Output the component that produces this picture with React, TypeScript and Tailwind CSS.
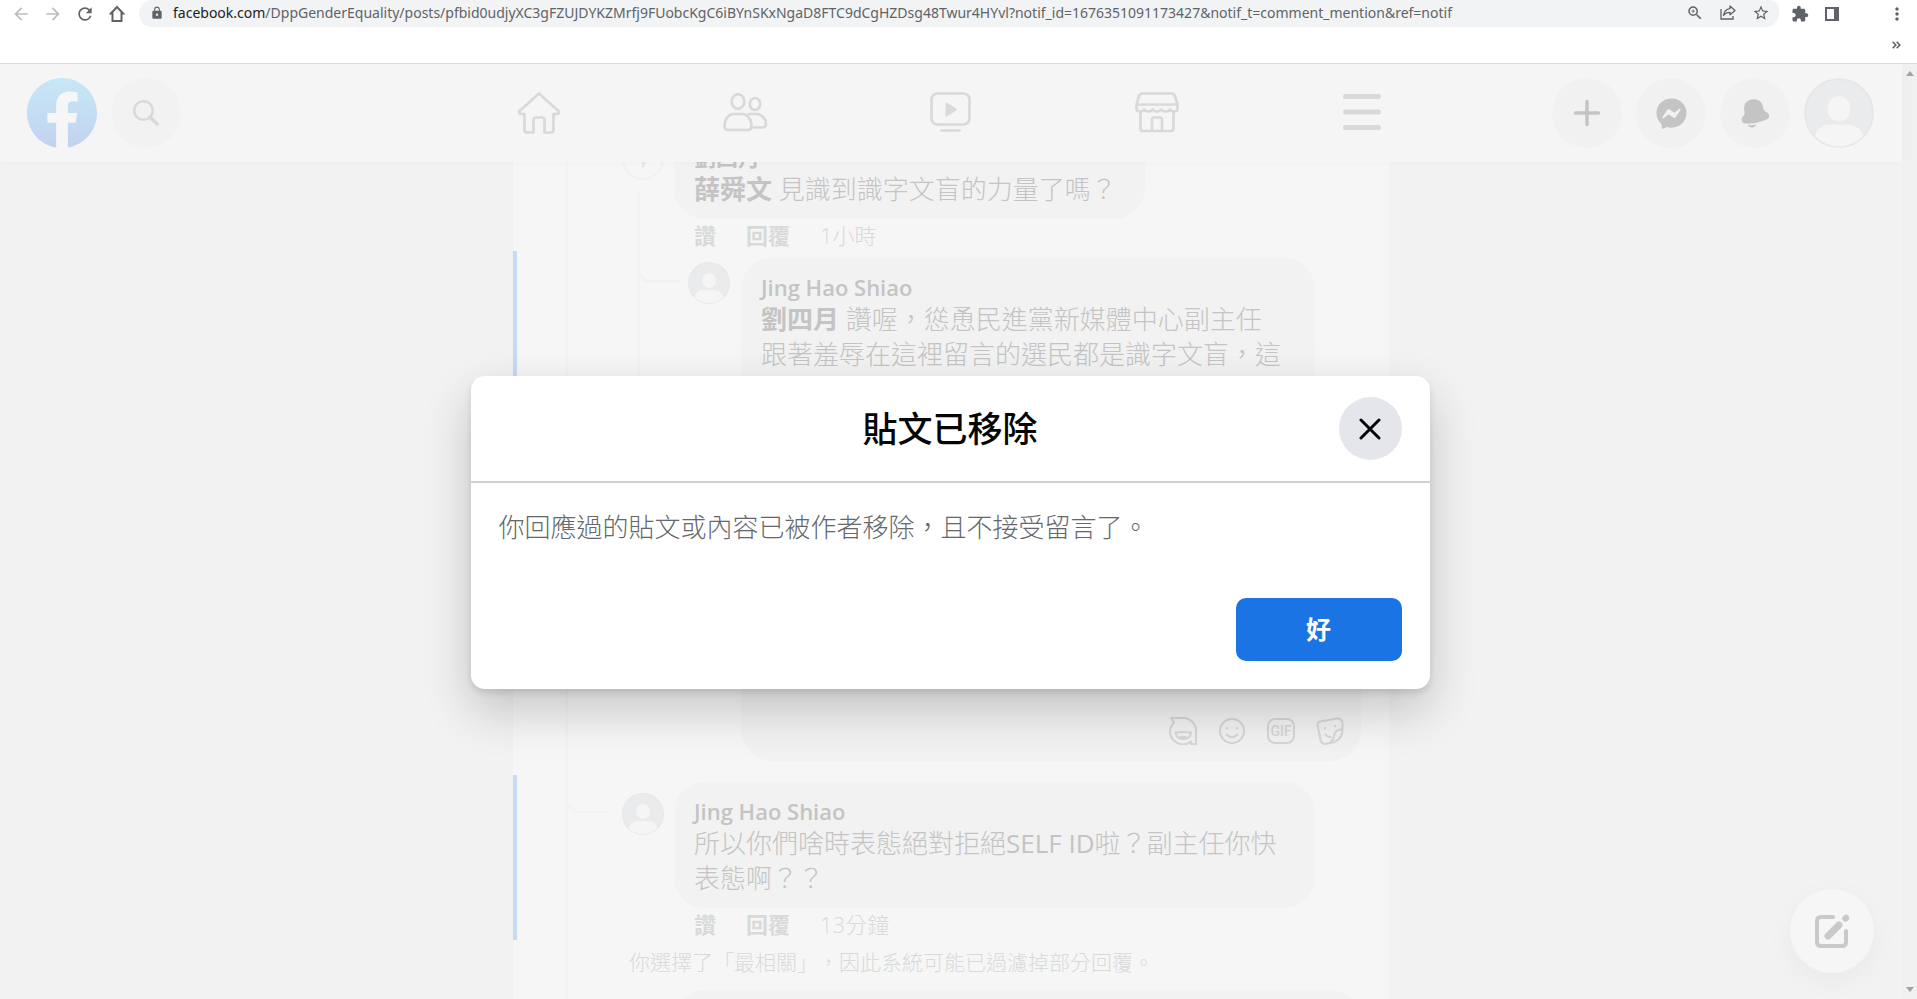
import React from "react";
import { MdArrowBack, MdArrowForward, MdRefresh, MdLock, MdZoomIn, MdStarBorder, MdExtension, MdMoreVert } from "react-icons/md";

const CJK = "font-['Open_Sans','Noto_Sans_CJK_TC',sans-serif] [text-spacing-trim:space-all]";

function HomeOutline() {
  return (
    <svg width="16" height="18" viewBox="0 0 16 18" fill="none" stroke="#5f6368" strokeWidth="2" aria-hidden="true">
      <path d="M8 2 1.8 8.5H3.5V16h9V8.5h1.7Z" />
    </svg>
  );
}

function ShareIcon() {
  return (
    <svg width="16" height="15" viewBox="0 0 16 15" fill="none" stroke="#5f6368" strokeWidth="1.3" aria-hidden="true">
      <path d="M1 4v10h12v-3" />
      <path d="M10 1l5 4.500-5 4.300V7.300C7 7.200 5 8 3.500 10.500 4 6.500 6.500 4 10 3.600Z" strokeLinejoin="round" />
    </svg>
  );
}

function BrowserToolbar() {
  return (
    <div className="shrink-0 border-b border-[#dadce0] bg-white text-[#5f6368]">
      <div className="flex h-[27px] items-center pr-[10px] pl-[11px]">
        <div className="flex w-32 items-center gap-3">
          <button aria-label="Back" className="text-[#babcbe]"><MdArrowBack size={20} /></button>
          <button aria-label="Forward" className="text-[#babcbe]"><MdArrowForward size={20} /></button>
          <button aria-label="Reload"><MdRefresh size={20} /></button>
          <button aria-label="Home" className="flex w-5 justify-center"><HomeOutline /></button>
        </div>
        <div className="flex h-full min-w-0 flex-1 items-center rounded-b-[14px] rounded-tl-[14px] rounded-tr-[10px] bg-[#f1f3f4] pr-[9px] pb-[2px] pl-[11px]">
          <MdLock size={14} className="shrink-0" />
          <div className="ml-[9px] min-w-0 flex-1 truncate font-['Noto_Sans',sans-serif] text-[14px] leading-6 text-[#5f6368]">
            <span className="text-[#202124]">facebook.com</span>/DppGenderEquality/posts/pfbid0udjyXC3gFZUJDYKZMrfj9FUobcKgC6iBYnSKxNgaD8FTC9dCgHZDsg48Twur4HYvl?notif_id=1676351091173427&amp;notif_t=comment_mention&amp;ref=notif
          </div>
          <div className="flex items-center gap-4">
            <button aria-label="Zoom"><MdZoomIn size={18} /></button>
            <button aria-label="Share"><ShareIcon /></button>
            <button aria-label="Bookmark"><MdStarBorder size={18} /></button>
          </div>
        </div>
        <div className="ml-3 flex items-center">
          <button aria-label="Extensions"><MdExtension size={18} /></button>
          <button aria-label="Side panel" className="ml-4">
            <svg width="14" height="14" viewBox="0 0 14 14" aria-hidden="true">
              <path fill="#5f6368" fillRule="evenodd" d="M0 0h14v14H0ZM2 2v10h7V2Z" />
            </svg>
          </button>
          <button aria-label="Menu" className="ml-12"><MdMoreVert size={20} /></button>
        </div>
      </div>
      <div className="flex h-9 items-center justify-end pr-4">
        <button aria-label="More bookmarks">
          <svg width="9" height="8" viewBox="0 0 9 8" fill="none" stroke="#5f6368" strokeWidth="1.600" aria-hidden="true">
            <path d="M.7.8 3.800 4 .7 7.200M4.700.8 7.800 4 4.700 7.200" />
          </svg>
        </button>
      </div>
    </div>
  );
}

function FacebookLogo() {
  return (
    <svg viewBox="0 0 36 36" className="size-[70px]" aria-hidden="true">
      <defs>
        <linearGradient id="fb" x1="0" y1="0" x2="0" y2="1">
          <stop offset="0" stopColor="#c6e8f8" />
          <stop offset="1" stopColor="#c2d2ef" />
        </linearGradient>
      </defs>
      <path fill="url(#fb)" d="M15 35.800C6.500 34.300 0 26.900 0 18 0 8.100 8.100 0 18 0s18 8.100 18 18c0 8.900-6.500 16.300-15 17.800l-1-.8h-4l-1 .8z" />
      <path fill="#f6f6f6" d="M25 23l.8-5H21v-3.500c0-1.400.5-2.500 2.700-2.500H26V7.400c-1.300-.2-2.700-.4-4-.4-4.100 0-7 2.500-7 7v4h-4.500v5H15v12.700c1 .2 2 .3 3 .3s2-.1 3-.3V23h4z" />
    </svg>
  );
}

function NavIcon({ label, children }: { label: string; children: React.ReactNode }) {
  return (
    <a href="#" aria-label={label} className="flex flex-1 justify-center">
      <svg width="46" height="50" viewBox="0 0 46 50" fill="none" stroke="#d8dada" strokeWidth="2.700" strokeLinecap="round" strokeLinejoin="round" aria-hidden="true">
        {children}
      </svg>
    </a>
  );
}

function RoundButton({ label, children }: { label: string; children: React.ReactNode }) {
  return (
    <button aria-label={label} className="flex size-[70px] items-center justify-center rounded-full bg-[#f1f1f1] text-[#c4c4c4]">
      {children}
    </button>
  );
}

function Avatar({ className }: { className: string }) {
  return (
    <svg viewBox="0 0 42 42" className={className} aria-hidden="true">
      <clipPath id="avatar-disc"><circle cx="21" cy="21" r="20" /></clipPath>
      <circle cx="21" cy="21" r="20.300" fill="#eaebed" stroke="#e6e7e9" strokeWidth="1.200" />
      <g fill="#f5f5f5" clipPath="url(#avatar-disc)">
        <rect x="14.300" y="11" width="13.400" height="15" rx="6.700" />
        <path d="M6 37c1-6 5-9 9-9h12c4 0 8 3 9 9l-5 5H11Z" />
      </g>
    </svg>
  );
}

function SiteHeader() {
  return (
    <header className="z-10 flex h-[98px] shrink-0 items-center justify-between bg-[#f5f5f5] pr-7 pl-[27px] shadow-[0_2px_6px_rgba(0,0,0,0.02)]">
      <div className="flex w-[322px] gap-[14px]">
        <a href="#" aria-label="Facebook"><FacebookLogo /></a>
        <button aria-label="搜尋" className="flex size-[70px] items-center justify-center rounded-full bg-[#f2f2f2]">
          <svg width="28" height="28" viewBox="0 0 28 28" fill="none" stroke="#d8dada" strokeLinecap="round" aria-hidden="true">
            <circle cx="11.500" cy="11.500" r="9.300" strokeWidth="2.600" />
            <path d="M18.500 18.500 25 25" strokeWidth="3.800" />
          </svg>
        </button>
      </div>
      <nav className="flex w-[1030px] items-center pt-[2px]">
        <NavIcon label="首頁">
          <path d="M23 4.500 3 22.500q0 2.500 2.500 2.500H8.500V41q0 2.500 2.500 2.500h6.500V31q0-2.500 2.500-2.500h6q2.500 0 2.500 2.500v12.500H35q2.500 0 2.500-2.500V25H40.500q2.500 0 2.500-2.500Z" />
        </NavIcon>
        <NavIcon label="朋友">
          <ellipse cx="16" cy="12.500" rx="6.300" ry="7.300" />
          <ellipse cx="33" cy="15" rx="5.200" ry="6" />
          <path d="M2.500 37c0-7 4.500-12 9-12h9c4.500 0 9 5 9 12 0 3-1 4-3.500 4H6c-2.500 0-3.500-1-3.500-4ZM27 25h7.500c5 0 9.500 5 9.500 9.500 0 3-1 4-3.500 4h-10" />
        </NavIcon>
        <NavIcon label="影片">
          <rect x="3.500" y="4.500" width="38" height="31" rx="6" />
          <path d="M13.500 41.500h18" />
          <path d="M18.500 14.500v12l9.500-6Z" fill="#d8dada" strokeWidth="2" />
        </NavIcon>
        <NavIcon label="Marketplace">
          <path d="M8.500 4.500h29q2.500 0 3.500 2.500l2.500 8.500v4q0 3-3 3-3.500 0-4.500-2-1.500 2-4.300 2t-4.300-2q-1.500 2-4.400 2t-4.400-2q-1.500 2-4.300 2t-4.300-2q-1 2-4.500 2-3 0-3-3v-4l2.500-8.500q1-2.500 3.500-2.500ZM2.500 15.500h41M6.500 23v16.500q0 2.500 2.500 2.500h28q2.500 0 2.500-2.500V23M18 41.500V30.500q0-2 2-2h6q2 0 2 2v11" />
        </NavIcon>
        <NavIcon label="選單">
          <path d="M5.500 7.500h33M5.500 23h33M5.500 38.500h33" strokeWidth="5" />
        </NavIcon>
      </nav>
      <div className="flex w-[322px] justify-end gap-[14px]">
        <RoundButton label="建立">
          <svg width="28" height="28" viewBox="0 0 28 28" stroke="currentColor" strokeWidth="3.400" strokeLinecap="round" aria-hidden="true"><path d="M14 2.500v23M2.500 14h23" /></svg>
        </RoundButton>
        <RoundButton label="Messenger">
          <svg width="35" height="35" viewBox="0 0 28 28" fill="currentColor" aria-hidden="true">
            <path d="M14 2.042c6.760 0 12 4.952 12 11.640S20.760 25.322 14 25.322a13.091 13.091 0 0 1-3.474-.461.956.956 0 0 0-.641.047L7.500 25.959a.961.961 0 0 1-1.348-.849l-.065-2.134a.957.957 0 0 0-.322-.684A11.389 11.389 0 0 1 2 13.682C2 6.994 7.240 2.042 14 2.042ZM6.794 17.086a.57.57 0 0 0 .827.758l3.786-2.874a.722.722 0 0 1 .868 0l2.800 2.100a1.800 1.800 0 0 0 2.600-.481l3.525-5.592a.57.57 0 0 0-.827-.758l-3.786 2.874a.722.722 0 0 1-.868 0l-2.800-2.100a1.800 1.800 0 0 0-2.600.481Z" />
          </svg>
        </RoundButton>
        <RoundButton label="通知">
          <svg width="35" height="35" viewBox="0 0 28 28" fill="currentColor" aria-hidden="true">
            <path d="M7.847 23.488C9.207 23.488 11.443 23.363 14.467 22.806 13.944 24.228 12.581 25.247 10.980 25.247 9.649 25.247 8.483 24.542 7.825 23.488L7.847 23.488ZM24.923 15.730C25.170 17.002 24.278 18.127 22.270 19.076 21.170 19.595 18.724 20.583 14.684 21.369 11.568 21.974 9.285 22.113 7.848 22.113 7.421 22.113 7.068 22.101 6.790 22.085 4.574 21.958 3.324 21.248 3.077 19.976 2.702 18.049 3.295 17.305 4.278 16.073L4.537 15.748C5.200 14.907 5.459 14.081 5.035 11.902 4.086 7.022 6.284 3.687 11.064 2.753 15.846 1.830 19.134 4.096 20.083 8.977 20.506 11.156 21.056 11.824 21.986 12.355L22.348 12.561C23.720 13.335 24.548 13.802 24.923 15.730Z" />
          </svg>
        </RoundButton>
        <button aria-label="帳號"><Avatar className="size-[70px]" /></button>
      </div>
    </header>
  );
}

function Bubble({ name, children }: { name: string; children: React.ReactNode }) {
  return (
    <div className="rounded-[31px] bg-[#f2f2f2] pt-[14px] pr-7 pb-3 pl-5 text-[26px] leading-[35px] font-light text-[#c4c4c4]">
      <div className="text-[22px] leading-[30px] font-semibold">{name}</div>
      <p>{children}</p>
    </div>
  );
}

function Actions({ time }: { time: string }) {
  return (
    <div className="flex h-8 items-center gap-[30px] pl-5 text-[22px] leading-8 text-[#d8dada]">
      <button className="font-bold">讚</button>
      <button className="font-bold">回覆</button>
      <a href="#" className="font-light">{time}</a>
    </div>
  );
}

function ComposerIcons() {
  const names = ["虛擬替身貼圖", "表情符號", "GIF", "貼圖"];
  const shapes = [
    <path key="a" d="M2 1h12a13 13 0 0 1 13 13v13h-5v-2.500A13 13 0 0 1 1 15q0-5 4-9.500ZM6.500 15.500q7.500-1 15.500 0-.5 6.500-7.500 6.500t-8-6.500ZM10.500 21q3.500-2.500 7.500 0" />,
    <g key="b"><circle cx="14" cy="14" r="12" /><path d="M8.500 17.500q5.500 5.500 11 0M9 11v.5M19 11v.5" /></g>,
    <rect key="c" x="1" y="2" width="26" height="24" rx="7" />,
    <path key="d" d="M1.500 8q0-3 3-3.500L21 1.500q5-.5 5.500 4.500v7q0 8-8 12l-9 2q-4 0-5-4.500ZM26.500 12q-7 1-8 5-.5 5-4 9M9 11v.5M19 9v.5M9.500 17.500q2 3 5 2.500" />,
  ];
  return (
    <div className="flex gap-[21px]">
      {names.map((n, i) => (
        <button key={n} aria-label={n} className="relative flex size-7 items-center justify-center">
          <svg width="28" height="28" viewBox="0 0 28 28" fill="none" stroke="currentColor" strokeWidth="2" strokeLinecap="round" strokeLinejoin="round" className="absolute inset-0" aria-hidden="true">
            {shapes[i]}
          </svg>
          {n === "GIF" && <span className="font-['Roboto',sans-serif] text-[14px] leading-none font-medium">GIF</span>}
        </button>
      ))}
    </div>
  );
}

function Feed() {
  return (
    <main className="min-h-0 flex-1 overflow-hidden">
      <div className="relative mx-auto flex h-full max-w-[878px] flex-col border-x border-[#f0f1f1] bg-[#f6f6f6] *:shrink-0">
        <span className="absolute inset-y-0 left-[53px] w-[2px] bg-[#f2f2f2]" />
        <span className="absolute top-7 left-[124px] h-[300px] w-[3px] bg-[#f3f3f3]" />
        <article className="-mt-[34px] flex gap-[10px] pl-[109px]">
          <div className="relative mt-[10px] flex size-[42px] shrink-0 items-center justify-center overflow-hidden rounded-full border-2 border-[#f0f0f0] bg-[#f6f6f6]">
            <svg width="24" height="24" viewBox="0 0 24 24" fill="none" stroke="#f0e2e4" strokeWidth="2" aria-hidden="true"><path d="M2 6l6 8 3-4 1 9 7-12" /></svg>
          </div>
          <div className="w-fit">
            <Bubble name="劉四月"><b className="font-bold">薛舜文</b> 見識到識字文盲的力量了嗎？</Bubble>
            <Actions time="1小時" />
          </div>
        </article>

        <article className="relative h-[250px] border-l-4 border-[#c6daf3] pt-[7px] pr-[74px] pl-[171px]">
          <span className="absolute top-0 left-[120px] h-8 w-[42px] rounded-bl-[14px] border-b-[3px] border-l-[3px] border-[#f2f2f2]" />
          <div className="flex h-full gap-[11px]">
            <Avatar className="mt-1 size-[42px] shrink-0" />
            <div className="h-full flex-1 overflow-hidden rounded-t-[31px] bg-[#f2f2f2]">
              <Bubble name="Jing Hao Shiao"><b className="font-bold">劉四月</b> 讚喔，慫恿民進黨新媒體中心副主任跟著羞辱在這裡留言的選民都是識字文盲，這</Bubble>
            </div>
          </div>
        </article>

        <section className="pr-7 pb-[14px] pl-[228px]">
          <div className="flex h-[260px] items-end justify-end rounded-[31px] bg-[#f2f2f2] pr-[17px] pb-4 text-[#d4d6d7]">
            <ComposerIcons />
          </div>
        </section>

        <article className="relative border-l-4 border-[#c6daf3] pt-[7px] pr-[74px] pl-[105px]">
          <span className="absolute top-0 left-[49px] h-[38px] w-11 rounded-bl-[14px] border-b-2 border-l-2 border-[#f2f2f2]" />
          <div className="flex gap-[10px]">
            <Avatar className="mt-[11px] size-[42px] shrink-0" />
            <div className="flex-1">
              <Bubble name="Jing Hao Shiao">所以你們啥時表態絕對拒絕<span className="font-normal">SELF ID</span>啦？副主任你快表態啊？？</Bubble>
              <Actions time="13分鐘" />
            </div>
          </div>
        </article>

        <p className="relative pl-[116px] text-[21px] leading-[44px] font-light text-[#d8dada]">你選擇了「最相關」，因此系統可能已過濾掉部分回覆。</p>
        <div className="mt-[6px] mr-7 ml-[160px] h-20 rounded-[31px] bg-[#f2f2f2]" />
      </div>
    </main>
  );
}

function RemovedDialog() {
  return (
    <div className="absolute inset-0 z-20 flex items-center justify-center pt-[2px] pr-[2px]">
      <div role="dialog" aria-labelledby="dialog-title" className="w-full max-w-[959px] rounded-[14px] bg-white shadow-[0_21px_49px_rgba(0,0,0,0.2),0_4px_7px_rgba(0,0,0,0.1)]">
        <div className="grid grid-cols-[63px_1fr_63px] items-center border-b-2 border-[#ced0d4] px-7 py-[21px]">
          <h2 id="dialog-title" className="col-start-2 text-center text-[35px] leading-[42px] font-medium text-[#050505]">貼文已移除</h2>
          <button aria-label="關閉" className="flex size-[63px] items-center justify-center rounded-full bg-[#e4e6eb]">
            <svg width="22" height="22" viewBox="0 0 22 22" stroke="#050505" strokeWidth="3" strokeLinecap="round" aria-hidden="true"><path d="M2 2l18 18M20 2 2 20" /></svg>
          </button>
        </div>
        <p className="px-7 pt-[26px] text-[26px] leading-9 font-light text-[#65676b]">你回應過的貼文或內容已被作者移除，且不接受留言了。</p>
        <div className="flex justify-end px-7 pt-[53px] pb-7">
          <button className="h-[63px] w-[166px] rounded-[10px] bg-[#1b74e4] text-[25px] font-bold text-white">好</button>
        </div>
      </div>
    </div>
  );
}

export default function App() {
  return (
    <div lang="zh-Hant" className={`flex h-screen flex-col overflow-hidden ${CJK}`}>
      <BrowserToolbar />
      <div className="flex min-h-0 flex-1">
        <div className="relative flex min-w-0 flex-1 flex-col bg-[#f2f2f2]">
          <SiteHeader />
          <Feed />
          <button aria-label="新訊息" className="absolute right-7 bottom-[26px] flex size-[84px] items-center justify-center rounded-full bg-[#f6f6f6] shadow-[0_8px_30px_rgba(0,0,0,0.04)]">
            <svg width="36" height="36" viewBox="0 0 36 36" fill="none" stroke="#c9c9c9" strokeLinecap="round" aria-hidden="true">
              <path d="M19 4H7Q3 4 3 8v21q0 4 4 4h21q4 0 4-4V18" strokeWidth="4" />
              <path d="M14 23 25 12" strokeWidth="7" />
              <path d="M31.500 5.500 32 5" strokeWidth="6.500" />
            </svg>
          </button>
          <RemovedDialog />
        </div>
        <div className="flex w-[15px] shrink-0 flex-col items-center justify-between bg-[#f0f0f0] py-[7px]">
          <svg width="8" height="5" viewBox="0 0 8 5" aria-hidden="true"><path d="M4 0 8 5H0Z" fill="#a3a3a3" /></svg>
          <svg width="8" height="5" viewBox="0 0 8 5" aria-hidden="true"><path d="M4 5 0 0h8Z" fill="#a3a3a3" /></svg>
        </div>
      </div>
    </div>
  );
}
